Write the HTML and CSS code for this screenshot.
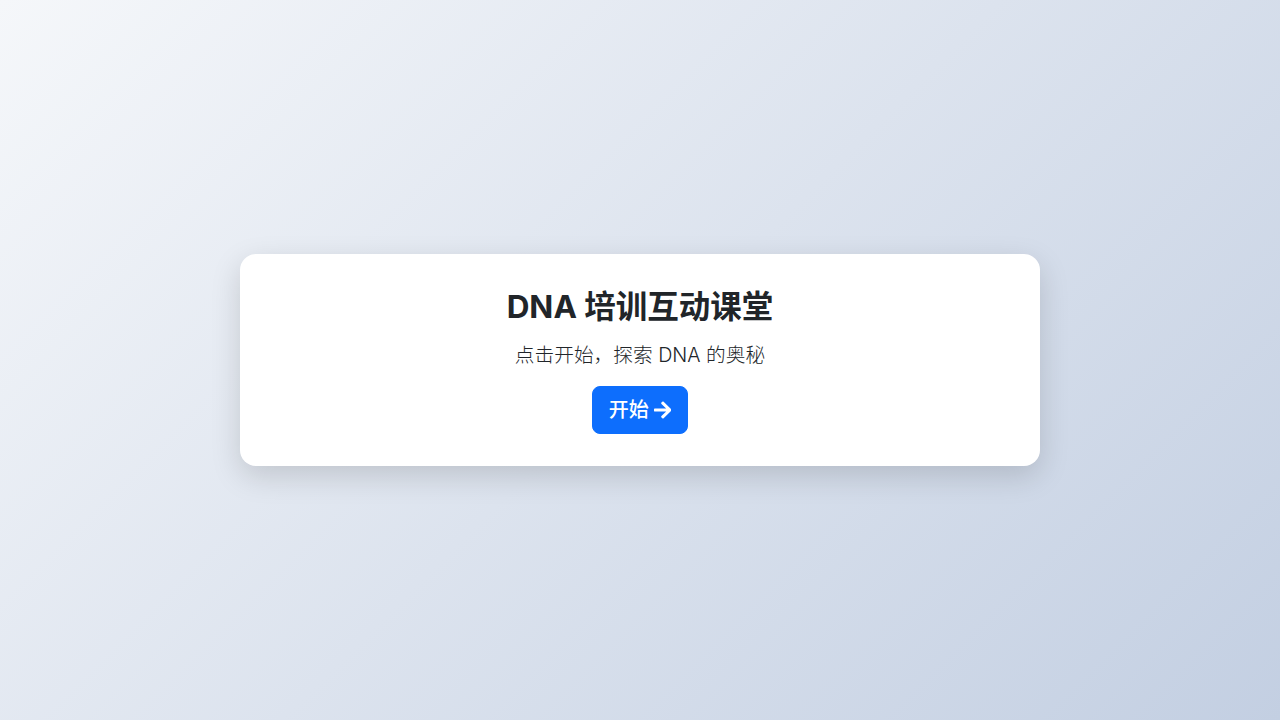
FILE: index.html
```html
<!DOCTYPE html>
<html lang="zh-CN">
<head>
<meta charset="utf-8">
<title>DNA 培训互动课堂</title>
<link rel="stylesheet" href="styles.css">
</head>
<body>
<main class="page">
  <section class="card">
    <h2 class="title">DNA 培训互动课堂</h2>
    <p class="lead">点击开始，探索 DNA 的奥秘</p>
    <button class="btn" type="button">开始 <svg class="icon" viewBox="0 0 448 512" aria-hidden="true"><path fill="currentColor" d="M190.5 66.9l22.2-22.2c9.4-9.4 24.6-9.4 33.9 0L441 239c9.4 9.4 9.4 24.6 0 33.9L246.6 467.3c-9.4 9.4-24.6 9.4-33.9 0l-22.2-22.2c-9.5-9.5-9.3-25 .4-34.3L311.4 296H24c-13.3 0-24-10.7-24-24v-32c0-13.3 10.7-24 24-24h287.4L190.9 101.2c-9.8-9.3-10-24.8-.4-34.3z"/></svg></button>
  </section>
</main>
</body>
</html>
```
FILE: styles.css
```css
* { box-sizing: border-box; }
html, body { margin: 0; height: 100%; }
body {
  font-family: "Inter", "Noto Sans CJK SC", sans-serif;
  color: #212529;
  background: linear-gradient(135deg, #f5f7fa 0%, #c3cfe2 100%);
}
.page {
  height: 100vh;
  display: flex;
  align-items: center;
  justify-content: center;
}
.card {
  width: 800px;
  background: #fff;
  border-radius: 16px;
  padding: 32px;
  text-align: center;
  box-shadow: 0 10px 30px rgba(0, 0, 0, 0.15);
}
.title {
  margin: 0 0 14px;
  padding-top: 2px;
  font-size: 31.5px;
  line-height: 1.2;
  font-weight: 700;
  color: #212529;
}
.lead {
  margin: 0 0 16px;
  font-size: 19.7px;
  line-height: 30px;
  font-weight: 300;
  color: #212529;
}
.btn {
  display: inline-flex;
  align-items: center;
  gap: 5px;
  height: 48px;
  padding: 8px 16px;
  border: 1px solid #0d6efd;
  border-radius: 8px;
  background: #0d6efd;
  color: #fff;
  font-family: inherit;
  font-size: 20px;
  line-height: 1.5;
  font-weight: 500;
  cursor: pointer;
}
.icon { width: 17.5px; height: 20px; }
```
